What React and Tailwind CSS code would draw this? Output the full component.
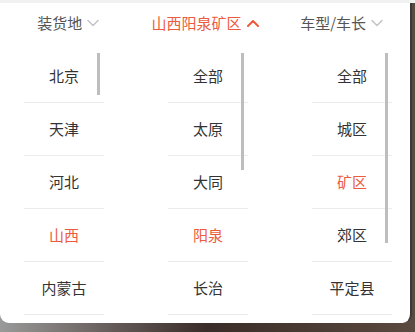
import React from "react";

const provinces = ["北京", "天津", "河北", "山西", "内蒙古"];
const cities = ["全部", "太原", "大同", "阳泉", "长治"];
const districts = ["全部", "城区", "矿区", "郊区", "平定县"];

function Chevron({ up, className }) {
  return (
    <svg width="12" height="8" viewBox="0 0 12 8" className={className}>
      <path
        d={up ? "M1 7L6 2l5 5" : "M1 1.5l5 5 5-5"}
        fill="none"
        stroke="currentColor"
        strokeWidth={up ? "2" : "1.5"}
        strokeLinecap="round"
        strokeLinejoin="round"
      />
    </svg>
  );
}

function Column({ items, active, bar }) {
  return (
    <div className="relative w-[80px]">
      {items.map((item) => (
        <div
          key={item}
          className={
            "h-[53px] flex items-center justify-center border-b border-[#ececec] " +
            (item === active ? "text-[#ec5b3d]" : "text-[#333]")
          }
        >
          {item}
        </div>
      ))}
      <div className={"absolute right-[4px] top-[3px] w-[3px] bg-[#bdbdbd] " + bar} />
    </div>
  );
}

export default function App() {
  return (
    <div
      className="w-[415px] h-[332px] overflow-hidden bg-gradient-to-r from-[#9a9a9a] via-[#3a2c28] to-[#5a4a40]"
      style={{ fontFamily: '"Noto Sans CJK SC", "Noto Sans", sans-serif' }}
    >
      <div className="h-[3px] bg-[#f1f1f1]" />
      <div className="w-[412px] h-[320px] bg-white rounded-b-[9px] border-r-[2px] border-[#3a3a3a] text-[15px]">
        <div className="flex h-[40px] items-center">
          <div className="flex-1 flex items-center justify-center gap-[5px] text-[#555]">
            <span>装货地</span>
            <Chevron className="text-[#c4c4c4]" />
          </div>
          <div className="flex-1 flex items-center justify-center gap-[5px] text-[#ec5b3d]">
            <span>山西阳泉矿区</span>
            <Chevron up />
          </div>
          <div className="flex-1 flex items-center justify-center gap-[5px] text-[#555]">
            <span>车型/车长</span>
            <Chevron className="text-[#c4c4c4]" />
          </div>
        </div>
        <div className="flex gap-[64px] pl-[24px] pt-[7px]">
          <Column items={provinces} active="山西" bar="h-[42px]" />
          <Column items={cities} active="阳泉" bar="h-[117px]" />
          <Column items={districts} active="矿区" bar="h-[190px]" />
        </div>
      </div>
    </div>
  );
}
